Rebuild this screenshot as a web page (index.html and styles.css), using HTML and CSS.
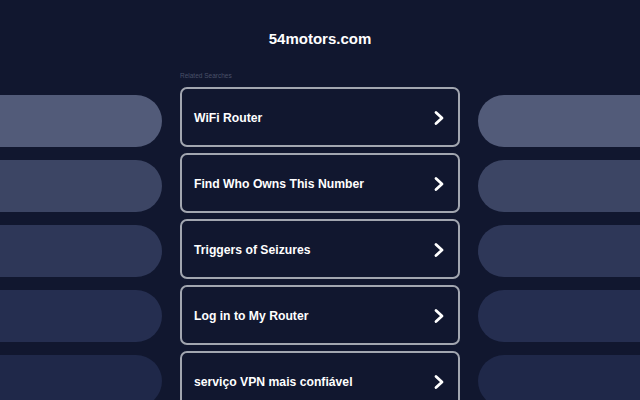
FILE: index.html
```html
<!DOCTYPE html>
<html>
<head>
<meta charset="utf-8">
<link rel="stylesheet" href="styles.css">
</head>
<body>
<div class="page">
  <h1 class="domain">54motors.com</h1>
  <div class="layout">
    <div class="side side-left">
      <div class="pill p1"></div>
      <div class="pill p2"></div>
      <div class="pill p3"></div>
      <div class="pill p4"></div>
      <div class="pill p5"></div>
    </div>
    <div class="center">
      <div class="related">Related Searches</div>
      <div class="links">
        <a class="link" href="#"><span>WiFi Router</span><svg class="chev" viewBox="0 0 12 16" width="12" height="16"><path d="M3 2.5 L9 8 L3 13.5" fill="none" stroke="#fff" stroke-width="2.8" stroke-linecap="round" stroke-linejoin="round"/></svg></a>
        <a class="link" href="#"><span>Find Who Owns This Number</span><svg class="chev" viewBox="0 0 12 16" width="12" height="16"><path d="M3 2.5 L9 8 L3 13.5" fill="none" stroke="#fff" stroke-width="2.8" stroke-linecap="round" stroke-linejoin="round"/></svg></a>
        <a class="link" href="#"><span>Triggers of Seizures</span><svg class="chev" viewBox="0 0 12 16" width="12" height="16"><path d="M3 2.5 L9 8 L3 13.5" fill="none" stroke="#fff" stroke-width="2.8" stroke-linecap="round" stroke-linejoin="round"/></svg></a>
        <a class="link" href="#"><span>Log in to My Router</span><svg class="chev" viewBox="0 0 12 16" width="12" height="16"><path d="M3 2.5 L9 8 L3 13.5" fill="none" stroke="#fff" stroke-width="2.8" stroke-linecap="round" stroke-linejoin="round"/></svg></a>
        <a class="link" href="#"><span>serviço VPN mais confiável</span><svg class="chev" viewBox="0 0 12 16" width="12" height="16"><path d="M3 2.5 L9 8 L3 13.5" fill="none" stroke="#fff" stroke-width="2.8" stroke-linecap="round" stroke-linejoin="round"/></svg></a>
      </div>
    </div>
    <div class="side side-right">
      <div class="pill p1"></div>
      <div class="pill p2"></div>
      <div class="pill p3"></div>
      <div class="pill p4"></div>
      <div class="pill p5"></div>
    </div>
  </div>
</div>
</body>
</html>
```
FILE: styles.css
```css
* { box-sizing: border-box; }
html, body {
  margin: 0;
  padding: 0;
  background: #11172f;
  height: 400px;
  overflow: hidden;
  font-family: "Liberation Sans", Arial, sans-serif;
}
.page {
  width: 640px;
  height: 400px;
  overflow: hidden;
}
.domain {
  margin: 0;
  padding-top: 30px;
  height: 69px;
  text-align: center;
  color: #ffffff;
  font-size: 15px;
  font-weight: bold;
  line-height: 18px;
}
.layout {
  display: flex;
  justify-content: center;
  gap: 18px;
}
.side {
  width: 162px;
  flex: none;
  display: flex;
  flex-direction: column;
  gap: 13px;
  padding-top: 26px;
}
.pill {
  height: 52px;
  flex: none;
}
.side-left .pill { border-radius: 0 26px 26px 0; }
.side-right .pill { border-radius: 26px 0 0 26px; }
.p1 { background: #525b79; }
.p2 { background: #3c4564; }
.p3 { background: #2e3758; }
.p4 { background: #252e50; }
.p5 { background: #1f2849; }
.center {
  width: 280px;
  flex: none;
}
.related {
  color: #4a5169;
  font-size: 6.5px;
  line-height: 8px;
  height: 18px;
  padding-top: 3px;
}
.links {
  display: flex;
  flex-direction: column;
  gap: 6px;
}
.link {
  height: 60px;
  border: 2px solid #a2a6b0;
  border-radius: 7px;
  display: flex;
  align-items: center;
  justify-content: space-between;
  padding: 2px 12px 0 12px;
  color: #ffffff;
  text-decoration: none;
  font-size: 12.2px;
  font-weight: bold;
}
.chev { flex: none; margin-right: 1px; }
```
